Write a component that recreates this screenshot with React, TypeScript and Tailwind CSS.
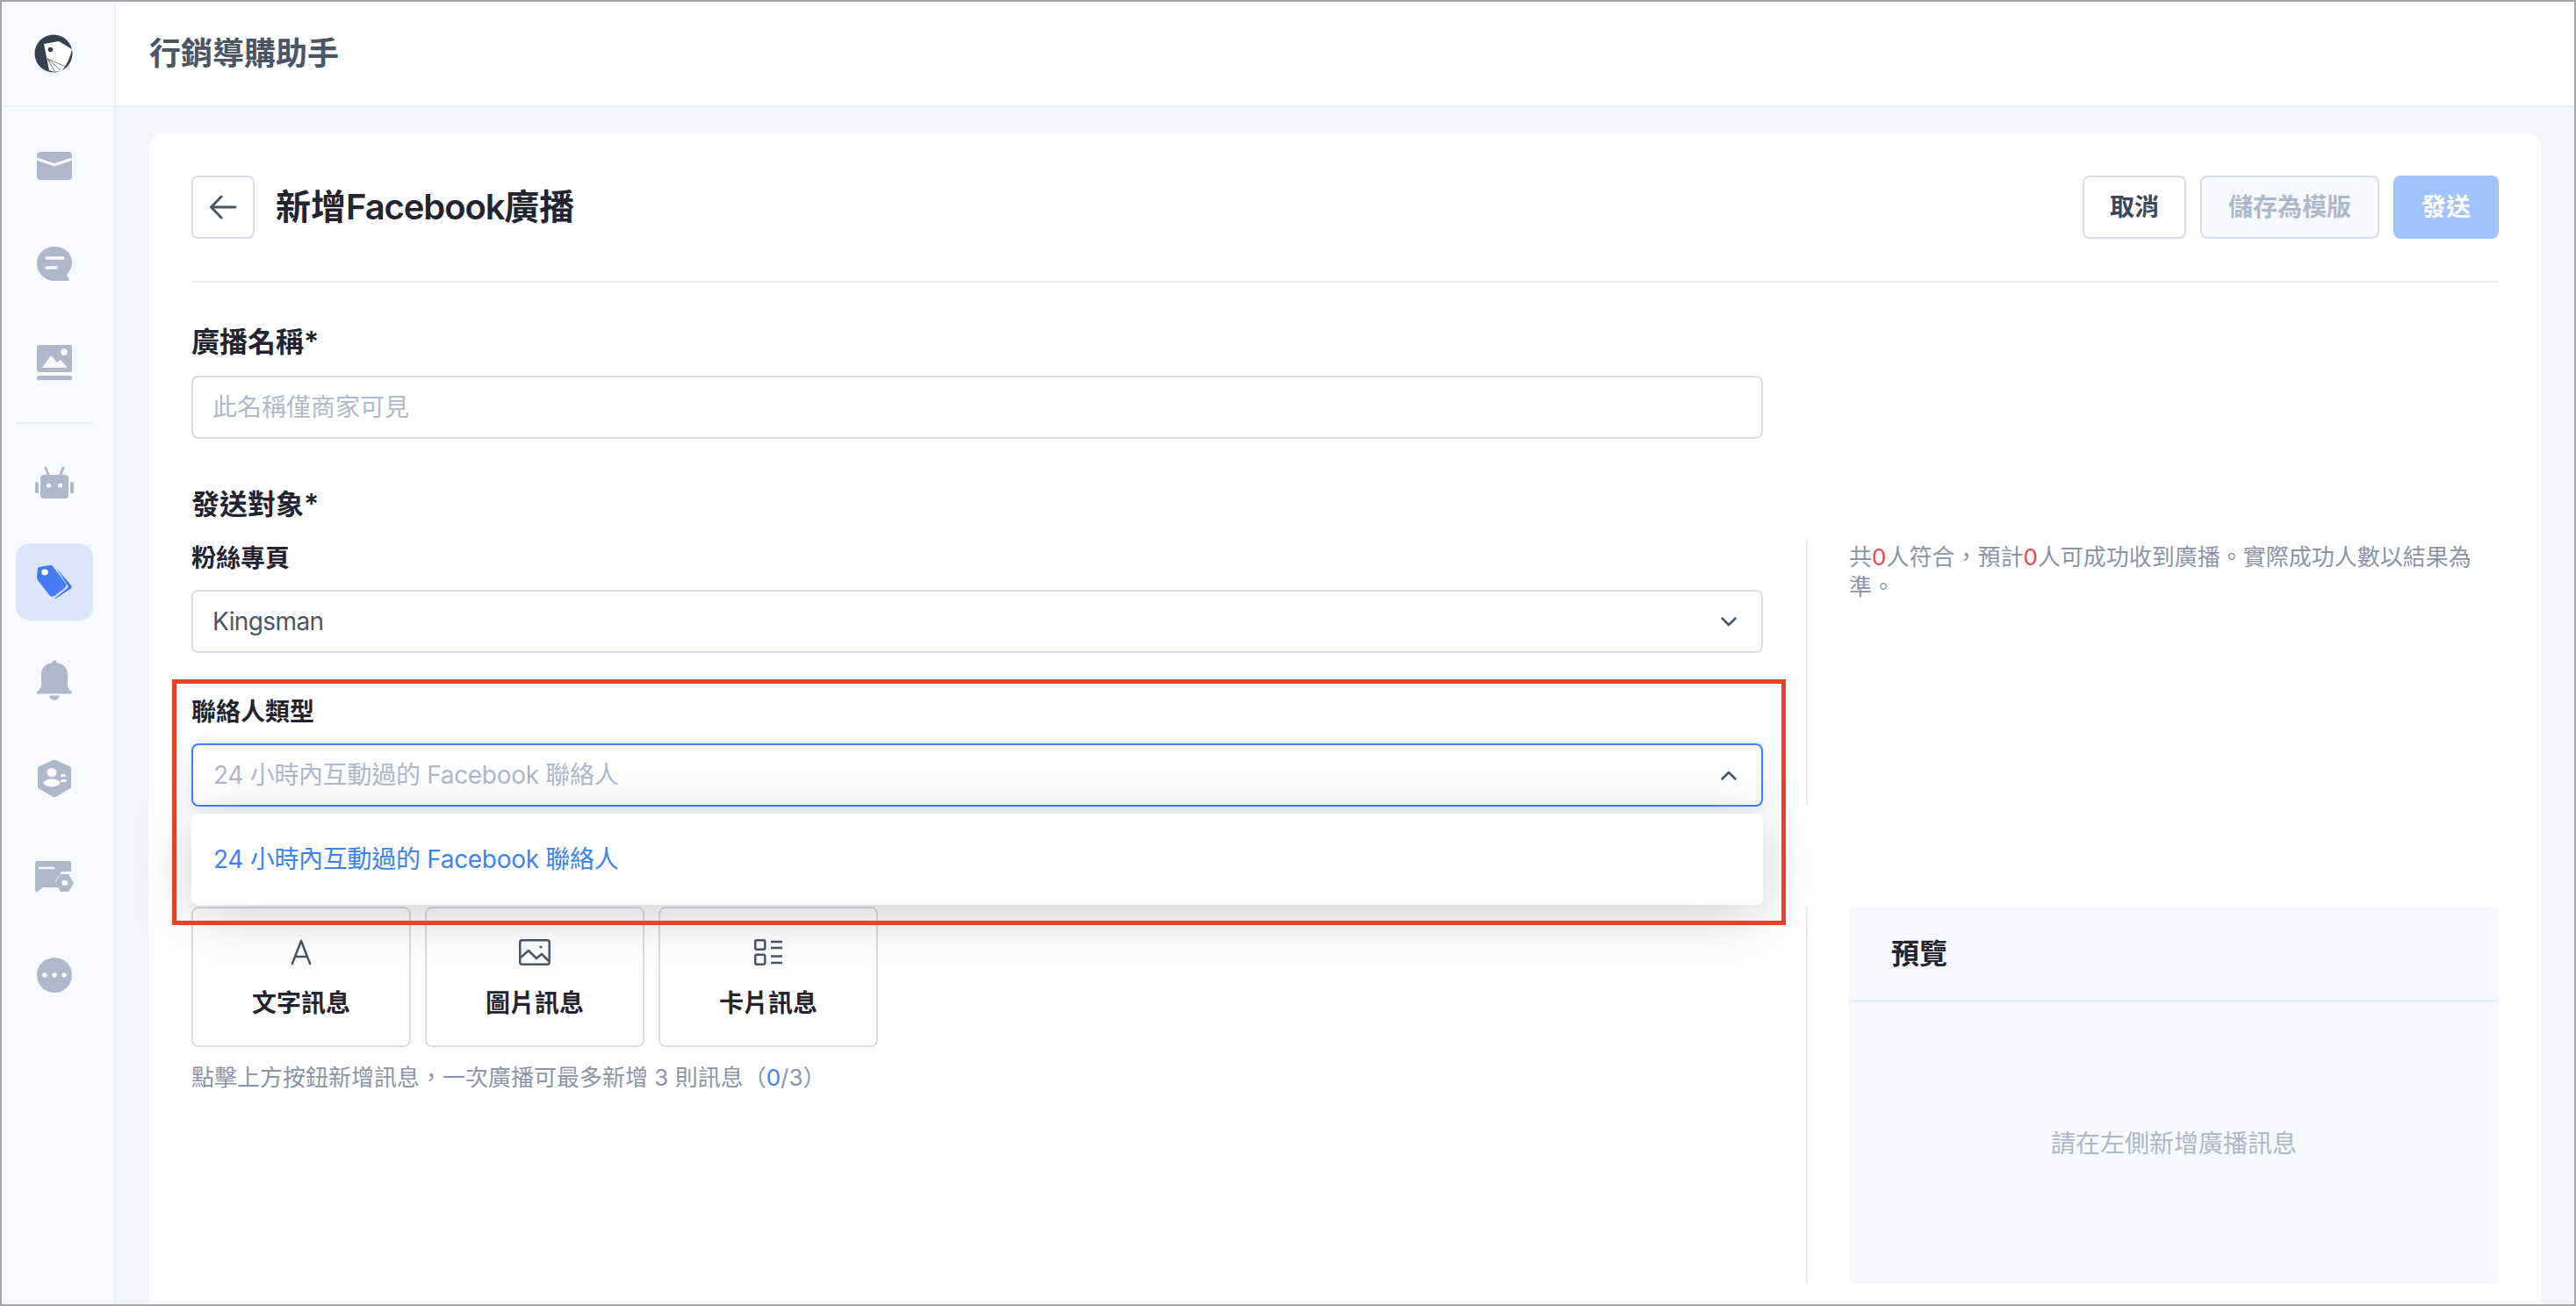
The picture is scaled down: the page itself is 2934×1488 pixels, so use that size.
const navIcons = "h-11 w-11 text-[#aeb8cb]";

function Logo() {
    return (
        <svg viewBox="0 0 44 44" className="h-11 w-11">
            <circle cx="22" cy="22" r="21.5" fill="#373e4f" />
            <path d="M11 11 L28 8 L43 17 C41 26 37 35 32 41 C27 43 21 43 17 41 Z" fill="#fff" />
            <circle cx="18.5" cy="17.5" r="2.8" fill="#373e4f" />
            <path d="M15 28 L36 37 M15 28 L30 41 M15 28 L23 42" stroke="#373e4f" strokeWidth="0.7" fill="none" />
        </svg>
    );
}

function MailIcon() {
    return (
        <svg viewBox="0 0 44 44" className={navIcons} fill="currentColor">
            <rect x="2" y="6" width="40" height="32" rx="4" />
            <path d="M2 14 L22 21 L42 14" fill="none" stroke="#f7f9fc" strokeWidth="3" />
        </svg>
    );
}

function ChatIcon() {
    return (
        <svg viewBox="0 0 44 44" className={navIcons} fill="currentColor">
            <path d="M22 2 C33 2 42 9 42 20 C42 26 39 31 36 34 L38.5 39 C39 40 38.5 41 37 41 L22 41 C11 41 2 32 2 21 C2 10 11 2 22 2 Z" />
            <path d="M13 15 H32 M13 26 H24" fill="none" stroke="#f7f9fc" strokeWidth="3.5" strokeLinecap="round" />
        </svg>
    );
}

function GalleryIcon() {
    return (
        <svg viewBox="0 0 44 44" className={navIcons} fill="currentColor">
            <rect x="2" y="2" width="40" height="31" rx="3" />
            <rect x="2" y="37" width="40" height="5" rx="2.5" />
            <path d="M8 28 L18 14 L25 22 L29 19 L37 28 Z" fill="#f7f9fc" />
            <circle cx="33" cy="10" r="3.8" fill="#f7f9fc" />
        </svg>
    );
}

function RobotIcon() {
    return (
        <svg viewBox="0 0 44 44" className={navIcons} fill="currentColor">
            <rect x="6" y="12" width="32" height="27" rx="4" />
            <rect x="0" y="20" width="4" height="13" rx="1.5" />
            <rect x="40" y="20" width="4" height="13" rx="1.5" />
            <path d="M12 4 L15 12 M32 4 L29 12" stroke="currentColor" strokeWidth="3" strokeLinecap="round" />
            <circle cx="15.5" cy="24" r="2.6" fill="#f7f9fc" />
            <circle cx="28.5" cy="24" r="2.6" fill="#f7f9fc" />
        </svg>
    );
}

function TagIcon() {
    return (
        <svg viewBox="0 0 44 44" className="h-11 w-11">
            <defs>
                <linearGradient id="tagFill" x1="0" y1="0" x2="1" y2="1">
                    <stop offset="0" stopColor="#3f76ee" />
                    <stop offset="1" stopColor="#4d80fb" />
                </linearGradient>
            </defs>
            <path d="M24 6 L41 26 C42 28 42 29 40 30 L25 40 C24 41 23 41 22 41 L27 37 L37 29 C38 28 38 27 37 26 Z" fill="#3f73ee" />
            <path d="M5 5 L17 3 C18 3 19 3 20 4 L35 24 C36 26 35 28 34 29 L22 38 C20 39 18 39 17 38 L3 20 C2 18 2 17 2 16 L3 7 C3 6 4 5 5 5 Z" fill="url(#tagFill)" />
            <ellipse cx="11" cy="11" rx="3.8" ry="3.4" fill="#fff" />
        </svg>
    );
}

function BellIcon() {
    return (
        <svg viewBox="0 0 44 46" className="h-[46px] w-11 text-[#aeb8cb]" fill="currentColor">
            <circle cx="22" cy="3" r="2.5" />
            <path d="M22 3 C12 3 7 9 7 17 L7 28 C7 32 5 34 2.5 36 C1.5 37 2 38.5 3.5 38.5 L40.5 38.5 C42 38.5 42.5 37 41.5 36 C39 34 37 32 37 28 L37 17 C37 9 32 3 22 3 Z" />
            <path d="M16 40.5 H28 C27.5 44 25 45.5 22 45.5 C19 45.5 16.5 44 16 40.5 Z" />
        </svg>
    );
}

function ContactsIcon() {
    return (
        <svg viewBox="0 0 44 44" className={navIcons} fill="currentColor">
            <path d="M20.5 1 C21.5 0.6 22.5 0.6 23.5 1 L39 8 C40.5 8.7 41 9.5 41 11 L41 31 C41 32.5 40.5 33.5 39 34 L23.5 43 C22.5 43.5 21.5 43.5 20.5 43 L5 34 C3.5 33.5 3 32.5 3 31 L3 11 C3 9.5 3.5 8.7 5 8 Z" />
            <ellipse cx="19" cy="15" rx="5.6" ry="5.2" fill="#f7f9fc" />
            <ellipse cx="19" cy="27" rx="9.5" ry="4.4" fill="#f7f9fc" />
            <rect x="29" y="17" width="6" height="3" rx="1.5" fill="#f7f9fc" />
            <rect x="29" y="23" width="7" height="3" rx="1.5" fill="#f7f9fc" />
        </svg>
    );
}

function TicketIcon() {
    return (
        <svg viewBox="0 0 44 38" className="h-[38px] w-11 text-[#aeb8cb]" fill="currentColor">
            <path d="M3 1 H38 C40 1 41 2 41 4 L41 13 L30 13 L23 25 L26 31 L9 31 L2.5 36 C1 37 0 36 0 34.5 L0 4 C0 2 1 1 3 1 Z" />
            <path d="M5 9 H21" fill="none" stroke="#f7f9fc" strokeWidth="2.6" strokeLinecap="round" />
            <path d="M29 16 H38 L44 26 L38 36 H29 L23 26 Z" />
            <ellipse cx="33.7" cy="26" rx="3.6" ry="3" fill="#f7f9fc" />
        </svg>
    );
}

function MoreIcon() {
    return (
        <svg viewBox="0 0 44 44" className={navIcons} fill="currentColor">
            <circle cx="22" cy="22" r="20" />
            <circle cx="11" cy="22" r="2.8" fill="#f7f9fc" />
            <circle cx="22" cy="22" r="2.8" fill="#f7f9fc" />
            <circle cx="33" cy="22" r="2.8" fill="#f7f9fc" />
        </svg>
    );
}

function NavItem({ children, active }: { readonly children: React.ReactNode; readonly active?: boolean }) {
    return (
        <div className={`flex h-[88px] w-[88px] items-center justify-center rounded-2xl ${active ? "bg-[#dbe6fb]" : ""}`}>
            {children}
        </div>
    );
}

function Chevron({ up }: { readonly up?: boolean }) {
    return (
        <svg viewBox="0 0 18 11" className="h-[11px] w-[18px]" fill="none" stroke="#4b5563" strokeWidth="2.5" strokeLinecap="round" strokeLinejoin="round">
            <path d={up ? "M1.5 9.5 L9 2 L16.5 9.5" : "M1.5 1.5 L9 9 L16.5 1.5"} />
        </svg>
    );
}

function MessageButton({ label, children }: { readonly label: string; readonly children: React.ReactNode }) {
    return (
        <button className="flex h-[160px] w-[250px] flex-col items-center rounded-lg border-2 border-[#d9dde8] bg-white pt-[34px]">
            <div className="flex h-[32px] items-center justify-center">{children}</div>
            <span className="mt-[22px] text-[28px] leading-10 font-semibold text-[#23242f]">{label}</span>
        </button>
    );
}

export default function App() {
    return (
        <div lang="zh-Hant" className="relative flex h-screen overflow-hidden border-2 border-[#a5a6aa] bg-[#f3f5f9] font-['Inter','Noto_Sans_CJK_TC',sans-serif]">
            <div className="absolute top-[644px] -left-[2px] h-5 w-[2px] rounded-r-full bg-[#3b6ef0]" />
            <aside className="flex w-[130px] shrink-0 flex-col border-r-2 border-[#ebeff5] bg-[#f7f9fc]">
                <div className="flex h-[120px] w-full shrink-0 items-center border-b-2 border-[#ebeff5] pl-[37px]">
                    <Logo />
                </div>
                <nav className="flex flex-col items-start gap-6 pt-[23px] pl-4">
                    <NavItem><MailIcon /></NavItem>
                    <NavItem><ChatIcon /></NavItem>
                    <NavItem><GalleryIcon /></NavItem>
                    <div className="h-[2px] w-[88px] bg-[#ebeff5]" />
                    <NavItem><RobotIcon /></NavItem>
                    <NavItem active><TagIcon /></NavItem>
                    <NavItem><BellIcon /></NavItem>
                    <NavItem><ContactsIcon /></NavItem>
                    <NavItem><TicketIcon /></NavItem>
                    <NavItem><MoreIcon /></NavItem>
                </nav>
            </aside>

            <div className="flex min-w-0 flex-1 flex-col">
                <header className="flex h-[120px] shrink-0 items-center border-b-2 border-[#ebeff5] bg-white pl-[38px]">
                    <h1 className="text-[36px] font-semibold text-[#4b5563]">行銷導購助手</h1>
                </header>

                <main className="mx-[38px] mt-[30px] flex-1 rounded-t-2xl bg-white px-12 pt-12">
                    <div className="flex items-center border-b-2 border-[#e9edf3] pb-12">
                        <button className="flex h-[72px] w-[72px] items-center justify-center rounded-lg border-2 border-[#d9dde8]">
                            <svg viewBox="0 0 32 28" className="h-7 w-8" fill="none" stroke="#4b5563" strokeWidth="3" strokeLinecap="round" strokeLinejoin="round">
                                <path d="M30 14 H2.5 M14 2 L2.5 14 L14 26" />
                            </svg>
                        </button>
                        <h2 className="ml-6 text-[40px] font-semibold text-[#23242f]">新增<span className="tracking-[-1.1px]">Facebook</span>廣播</h2>
                        <div className="ml-auto flex gap-4">
                            <button className="h-[72px] w-[118px] rounded-lg border-2 border-[#d9dde8] bg-white text-[28px] font-semibold text-[#3f4654] shadow-xs">取消</button>
                            <button className="h-[72px] w-[204px] rounded-lg border-2 border-[#d9dde8] bg-[#f6f8fb] text-[28px] font-semibold text-[#aeb8cb]">儲存為模版</button>
                            <button className="h-[72px] w-[120px] rounded-lg bg-[#a0c3fb] text-[28px] font-semibold text-white">發送</button>
                        </div>
                    </div>

                    <div className="w-[1790px] pt-[44px]">
                        <div className="text-[32px] leading-[48px] font-semibold text-[#23242f]">廣播名稱*</div>
                        <div className="mt-[14px] flex h-[72px] items-center rounded-lg border-2 border-[#d9dde8] px-[22px] text-[28px] text-[#b0b9cb]">此名稱僅商家可見</div>
                        <div className="mt-[51px] text-[32px] leading-[48px] font-semibold text-[#23242f]">發送對象*</div>
                    </div>

                    <div className="mt-[15px] flex">
                        <div className="w-[1790px] shrink-0">
                            <div className="pt-[2px] text-[28px] leading-10 font-semibold text-[#23242f]">粉絲專頁</div>
                            <div className="mt-4 flex h-[72px] items-center justify-between rounded-lg border-2 border-[#d9dde8] pr-[28px] pl-[22px] text-[28px] tracking-[-0.6px] text-[#4b5563]">
                                Kingsman
                                <Chevron />
                            </div>

                            <div className="relative mt-[47px]">
                                <div className="text-[28px] leading-10 font-semibold text-[#23242f]">聯絡人類型</div>
                                <div className="relative mt-4">
                                    <div className="flex h-[72px] items-center justify-between rounded-lg border-2 border-[#3b82f6] bg-white pr-[28px] pl-[23px] text-[28px] tracking-[-0.3px] text-[#b0b9cb] shadow-[0_0_16px_rgba(59,130,246,0.2)]">
                                        24 小時內互動過的 Facebook 聯絡人
                                        <Chevron up />
                                    </div>
                                    <div className="absolute top-full right-0 left-0 z-20 mt-2 flex h-[104px] items-center rounded-lg bg-white pl-[25px] text-[28px] tracking-[-0.3px] text-[#3b82f6] shadow-[0_10px_70px_rgba(0,0,0,0.2)]">
                                        24 小時內互動過的 Facebook 聯絡人
                                    </div>
                                </div>
                                <div className="pointer-events-none absolute -top-[17px] -left-[22px] z-30 h-[280px] w-[1838px] border-[5px] border-[#e94125]" />
                            </div>

                            <div className="mt-[114px] flex gap-4">
                                <MessageButton label="文字訊息">
                                    <svg viewBox="0 0 24 30" className="h-[30px] w-6" fill="none" stroke="#4b5563" strokeWidth="2.5" strokeLinejoin="round">
                                        <path d="M1.5 29 L12 2 L22.5 29 M5.5 20 H18.5" />
                                    </svg>
                                </MessageButton>
                                <MessageButton label="圖片訊息">
                                    <svg viewBox="0 0 36 30" className="h-[30px] w-9" fill="none" stroke="#4b5563" strokeWidth="2.5" strokeLinejoin="round">
                                        <rect x="1.25" y="1.25" width="33.5" height="27.5" rx="2.5" />
                                        <path d="M2 21 L11 13 L20 22 L26 17 L34 25" />
                                        <circle cx="25" cy="9" r="1.6" fill="#4b5563" stroke="none" />
                                    </svg>
                                </MessageButton>
                                <MessageButton label="卡片訊息">
                                    <svg viewBox="0 0 32 30" className="h-[30px] w-8" fill="none" stroke="#4b5563" strokeWidth="2.5" strokeLinejoin="round">
                                        <rect x="1.25" y="1.25" width="11" height="10.5" rx="1.5" />
                                        <rect x="1.25" y="17.75" width="11" height="11" rx="1.5" />
                                        <path d="M19 3 H32 M19 10 H32 M19 19.5 H32 M19 27 H32" />
                                    </svg>
                                </MessageButton>
                            </div>
                            <p className="mt-[18px] text-[26px] leading-[34px] text-[#8c93a8]">
                                點擊上方按鈕新增訊息，一次廣播可最多新增 3 則訊息（<span className="text-[#3b82f6]">0</span>/3）
                            </p>
                        </div>

                        <div className="ml-[49px] flex h-[849px] flex-1 flex-col justify-between">
                            <div className="h-[304px] border-l-2 border-[#e9edf3] pl-[47px]">
                                <p className="w-[722px] pt-1 text-[26px] leading-[34px] text-[#8c93a8]">
                                    共<span className="text-[#ef4444]">0</span>人符合，預計<span className="text-[#ef4444]">0</span>人可成功收到廣播。實際成功人數以結果為準。
                                </p>
                            </div>
                            <div className="h-[430px] border-l-2 border-[#e9edf3] pl-[47px]">
                                <div className="flex h-full flex-col bg-[#f6f8fc]">
                                    <div className="flex h-[109px] items-center border-b-[3px] border-[#eaf0f5] pt-[2px] pl-12 text-[32px] font-semibold text-[#23242f]">預覽</div>
                                    <div className="flex flex-1 items-center justify-center text-[28px] text-[#aeb7c9]">請在左側新增廣播訊息</div>
                                </div>
                            </div>
                        </div>
                    </div>
                </main>
            </div>
        </div>
    );
}
